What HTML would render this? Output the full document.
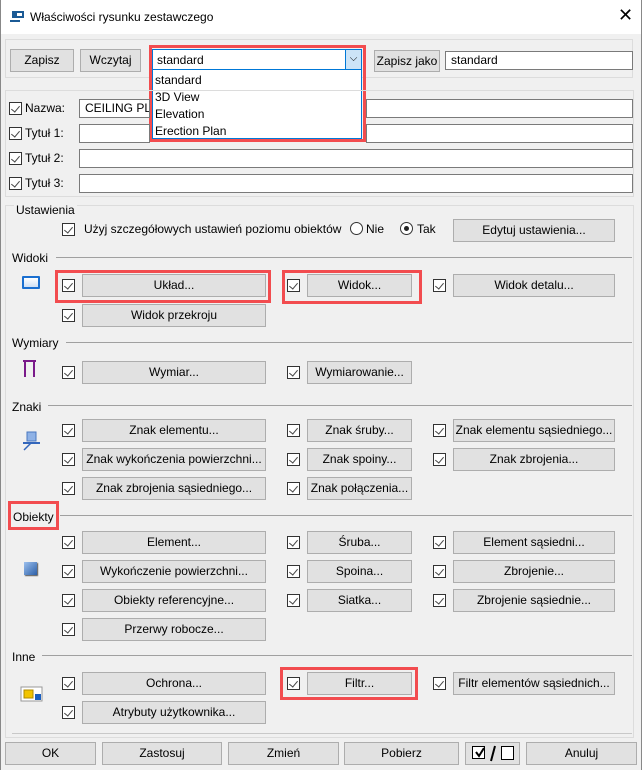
<!DOCTYPE html>
<html><head><meta charset="utf-8"><style>
*{box-sizing:border-box;margin:0;padding:0}
body{width:642px;height:770px;background:#f0f0f0;font-family:"Liberation Sans",sans-serif;font-size:12px;color:#000;position:relative;overflow:hidden}
div,span{position:absolute}
.b{background:#e1e1e1;border:1px solid #adadad;height:23px;text-align:center;line-height:21px;white-space:nowrap}
.c{width:13px;height:13px;border:1px solid #333;background:#fff}
.c::after{content:"";position:absolute;left:3px;top:1px;width:4px;height:7px;border:solid #444;border-width:0 1.5px 1.5px 0;transform:rotate(40deg)}
.in{background:#fff;border:1px solid #7a7a7a;height:19px;line-height:17px;padding-left:5px;white-space:nowrap;overflow:hidden}
.g{border:1px solid #dcdcdc}
.l{white-space:nowrap}
.hr{height:1px;background:#a0a0a0}
.r{border:3px solid #f24c4f}
</style></head><body>
<div style="left:0;top:0;width:642px;height:34px;background:#fff"></div>
<div style="left:0;top:0;width:1px;height:770px;background:#888"></div>
<div style="left:641px;top:0;width:1px;height:770px;background:#888"></div>
<svg style="position:absolute;left:10px;top:11px" width="16" height="12"><rect x="2" y="0" width="12" height="7" fill="#1b5a95"/><rect x="0" y="9" width="10" height="2" fill="#1b5a95"/><rect x="7" y="2" width="5" height="3" fill="#fff"/></svg>
<span class="l" style="left:30px;top:10px">Właściwości rysunku zestawczego</span>
<span style="left:618px;top:5px;font-size:18px;font-weight:300">✕</span>

<div class="g" style="left:5px;top:39px;width:628px;height:39px"></div>
<div class="b" style="left:10px;top:49px;width:64px">Zapisz</div>
<div class="b" style="left:80px;top:49px;width:61px">Wczytaj</div>
<div style="left:152px;top:49px;width:210px;height:21px;background:#fff;border:1px solid #0078d7"></div>
<span style="left:157px;top:53px">standard</span>
<div style="left:345px;top:50px;width:16px;height:19px;background:#cce4f7;border-left:1px solid #0078d7;text-align:center;font-size:10px;line-height:17px">⌵</div>
<div style="left:152px;top:69px;width:210px;height:70px;background:#fff;border:1px solid #0078d7"></div>
<span style="left:155px;top:73px">standard</span>
<span style="left:155px;top:90px">3D View</span>
<span style="left:155px;top:107px">Elevation</span>
<span style="left:155px;top:124px">Erection Plan</span>
<div class="r" style="left:149px;top:45px;width:217px;height:97px"></div>
<div class="b" style="left:374px;top:50px;width:66px;height:22px">Zapisz jako</div>
<div class="in" style="left:445px;top:51px;width:188px">standard</div>

<div class="g" style="left:5px;top:90px;width:629px;height:107px"></div>
<div class="c" style="left:9px;top:102px"></div><span style="left:25px;top:101px">Nazwa:</span>
<div class="in" style="left:79px;top:99px;width:71px">CEILING PLA</div>
<div class="in" style="left:366px;top:99px;width:267px"></div>
<div class="c" style="left:9px;top:127px"></div><span style="left:25px;top:126px">Tytuł 1:</span>
<div class="in" style="left:79px;top:124px;width:71px"></div>
<div class="in" style="left:366px;top:124px;width:267px"></div>
<div class="c" style="left:9px;top:152px"></div><span style="left:25px;top:151px">Tytuł 2:</span>
<div class="in" style="left:79px;top:149px;width:554px"></div>
<div class="c" style="left:9px;top:177px"></div><span style="left:25px;top:176px">Tytuł 3:</span>
<div class="in" style="left:79px;top:174px;width:554px"></div>

<div class="g" style="left:5px;top:205px;width:629px;height:533px"></div>
<div class="hr" style="left:12px;top:733px;width:620px;background:#c8c8c8"></div>
<span style="left:14px;top:203px;background:#f0f0f0;padding:0 2px">Ustawienia</span>
<div class="c" style="left:62px;top:223px"></div>
<span class="l" style="left:84px;top:222px">Użyj szczegółowych ustawień poziomu obiektów</span>
<div style="left:350px;top:222px;width:13px;height:13px;border:1px solid #333;border-radius:50%;background:#fff"></div><span style="left:366px;top:222px">Nie</span>
<div style="left:400px;top:222px;width:13px;height:13px;border:1px solid #333;border-radius:50%;background:#fff"></div><div style="left:404px;top:226px;width:5px;height:5px;border-radius:50%;background:#222"></div><span style="left:417px;top:222px">Tak</span>
<div class="b" style="left:453px;top:219px;width:162px">Edytuj ustawienia...</div>

<span style="left:12px;top:251px">Widoki</span><div class="hr" style="left:56px;top:257px;width:576px"></div>
<div style="left:22px;top:276px;width:18px;height:13px;border:2px solid #1a6fd0;background:linear-gradient(#fff,#cfe0f5);border-radius:1px"></div>
<span style="left:12px;top:336px">Wymiary</span><div class="hr" style="left:66px;top:342px;width:566px"></div>
<svg style="position:absolute;left:22px;top:360px" width="16" height="18"><path d="M1 1H14M3 1V17M12 1V17" stroke="#7a1a8a" stroke-width="2" fill="none"/></svg>
<span style="left:12px;top:400px">Znaki</span><div class="hr" style="left:48px;top:405px;width:584px"></div>
<svg style="position:absolute;left:22px;top:430px" width="20" height="22"><rect x="5" y="2" width="9" height="9" fill="#8fb2e6" stroke="#4a78c0"/><path d="M1 13H18" stroke="#3366bb" stroke-width="2"/><path d="M9 13L2 20" stroke="#3366bb" stroke-width="1.5"/></svg>
<span style="left:13px;top:510px">Obiekty</span><div class="hr" style="left:60px;top:515px;width:572px"></div>
<div class="r" style="left:8px;top:501px;width:51px;height:29px"></div>
<div style="left:24px;top:562px;width:13px;height:13px;background:linear-gradient(135deg,#9cc0ee,#2c5fa8);box-shadow:1px 1px 1px #555"></div>
<span style="left:12px;top:650px">Inne</span><div class="hr" style="left:42px;top:655px;width:590px"></div>
<svg style="position:absolute;left:20px;top:686px" width="24" height="16"><rect x="1" y="1" width="21" height="14" fill="#fff" stroke="#999"/><rect x="4" y="4" width="9" height="8" fill="#f2c400" stroke="#b08b00"/><rect x="15" y="8" width="6" height="6" fill="#1a5fc0"/></svg>

<div class="c" style="left:62px;top:279px"></div><div class="b" style="left:82px;top:274px;width:184px">Układ...</div>
<div class="c" style="left:287px;top:279px"></div><div class="b" style="left:307px;top:274px;width:105px">Widok...</div>
<div class="c" style="left:433px;top:279px"></div><div class="b" style="left:453px;top:274px;width:162px">Widok detalu...</div>
<div class="r" style="left:55px;top:270px;width:216px;height:33px"></div>
<div class="r" style="left:282px;top:270px;width:140px;height:34px"></div>
<div class="c" style="left:62px;top:309px"></div><div class="b" style="left:82px;top:304px;width:184px">Widok przekroju</div>

<div class="c" style="left:62px;top:366px"></div><div class="b" style="left:82px;top:361px;width:184px">Wymiar...</div>
<div class="c" style="left:287px;top:366px"></div><div class="b" style="left:307px;top:361px;width:105px">Wymiarowanie...</div>

<div class="c" style="left:62px;top:424px"></div><div class="b" style="left:82px;top:419px;width:184px">Znak elementu...</div>
<div class="c" style="left:287px;top:424px"></div><div class="b" style="left:307px;top:419px;width:105px">Znak śruby...</div>
<div class="c" style="left:433px;top:424px"></div><div class="b" style="left:453px;top:419px;width:162px">Znak elementu sąsiedniego...</div>
<div class="c" style="left:62px;top:453px"></div><div class="b" style="left:82px;top:448px;width:184px">Znak wykończenia powierzchni...</div>
<div class="c" style="left:287px;top:453px"></div><div class="b" style="left:307px;top:448px;width:105px">Znak spoiny...</div>
<div class="c" style="left:433px;top:453px"></div><div class="b" style="left:453px;top:448px;width:162px">Znak zbrojenia...</div>
<div class="c" style="left:62px;top:482px"></div><div class="b" style="left:82px;top:477px;width:184px">Znak zbrojenia sąsiedniego...</div>
<div class="c" style="left:287px;top:482px"></div><div class="b" style="left:307px;top:477px;width:105px">Znak połączenia...</div>

<div class="c" style="left:62px;top:536px"></div><div class="b" style="left:82px;top:531px;width:184px">Element...</div>
<div class="c" style="left:287px;top:536px"></div><div class="b" style="left:307px;top:531px;width:105px">Śruba...</div>
<div class="c" style="left:433px;top:536px"></div><div class="b" style="left:453px;top:531px;width:162px">Element sąsiedni...</div>
<div class="c" style="left:62px;top:565px"></div><div class="b" style="left:82px;top:560px;width:184px">Wykończenie powierzchni...</div>
<div class="c" style="left:287px;top:565px"></div><div class="b" style="left:307px;top:560px;width:105px">Spoina...</div>
<div class="c" style="left:433px;top:565px"></div><div class="b" style="left:453px;top:560px;width:162px">Zbrojenie...</div>
<div class="c" style="left:62px;top:594px"></div><div class="b" style="left:82px;top:589px;width:184px">Obiekty referencyjne...</div>
<div class="c" style="left:287px;top:594px"></div><div class="b" style="left:307px;top:589px;width:105px">Siatka...</div>
<div class="c" style="left:433px;top:594px"></div><div class="b" style="left:453px;top:589px;width:162px">Zbrojenie sąsiednie...</div>
<div class="c" style="left:62px;top:623px"></div><div class="b" style="left:82px;top:618px;width:184px">Przerwy robocze...</div>

<div class="c" style="left:62px;top:677px"></div><div class="b" style="left:82px;top:672px;width:184px">Ochrona...</div>
<div class="c" style="left:287px;top:677px"></div><div class="b" style="left:307px;top:672px;width:105px">Filtr...</div>
<div class="c" style="left:433px;top:677px"></div><div class="b" style="left:453px;top:672px;width:162px">Filtr elementów sąsiednich...</div>
<div class="r" style="left:280px;top:667px;width:138px;height:33px"></div>
<div class="c" style="left:62px;top:706px"></div><div class="b" style="left:82px;top:701px;width:184px">Atrybuty użytkownika...</div>

<div class="b" style="left:5px;top:742px;width:91px">OK</div>
<div class="b" style="left:102px;top:742px;width:120px">Zastosuj</div>
<div class="b" style="left:228px;top:742px;width:111px">Zmień</div>
<div class="b" style="left:344px;top:742px;width:115px">Pobierz</div>
<div class="b" style="left:465px;top:742px;width:55px"></div>
<div style="left:472px;top:746px;width:13px;height:13px;border:1.5px solid #000;background:#fff"></div>
<svg style="position:absolute;left:474px;top:746px" width="12" height="12"><path d="M2 6L5 10L10 2" stroke="#000" stroke-width="2" fill="none"/></svg>
<svg style="position:absolute;left:488px;top:745px" width="10" height="17"><path d="M7 1L3 16" stroke="#000" stroke-width="2"/></svg>
<div style="left:501px;top:746px;width:13px;height:14px;border:1.5px solid #000;background:#fff"></div>
<div class="b" style="left:526px;top:742px;width:111px">Anuluj</div>
</body></html>
